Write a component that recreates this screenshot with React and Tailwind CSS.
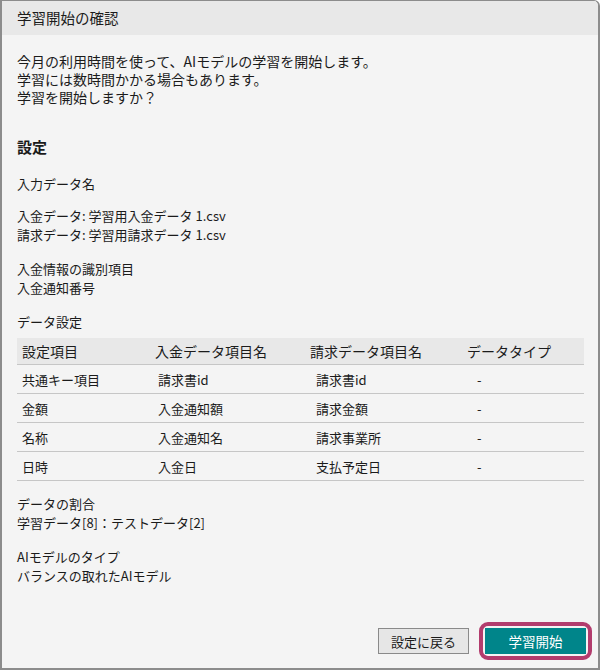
import React from "react";

const rows = [
  ["共通キー項目", "請求書id", "請求書id", "-"],
  ["金額", "入金通知額", "請求金額", "-"],
  ["名称", "入金通知名", "請求事業所", "-"],
  ["日時", "入金日", "支払予定日", "-"],
];

export default function App() {
  return (
    <div
      className="w-[600px] h-[670px] flex flex-col bg-[#f4f4f4] border-l-2 border-t border-r-2 border-b-2 border-[#8c8c8c] rounded-tr-[6px] overflow-hidden text-[#1b1b1b]"
      style={{ fontFamily: '"Noto Sans CJK JP", "Noto Sans", sans-serif' }}
    >
      <div className="h-[34px] shrink-0 bg-[#e8e8e8] flex items-center px-[15px] text-[14.5px]">
        学習開始の確認
      </div>

      <div className="flex-1 flex flex-col pl-[15px] pr-[14px] text-[13px] leading-[19px]">
        <div className="mt-[17px] leading-[18px] text-[14px]">
          <div>今月の利用時間を使って、AIモデルの学習を開始します。</div>
          <div>学習には数時間かかる場合もあります。</div>
          <div>学習を開始しますか？</div>
        </div>

        <div className="mt-[31px] text-[15px] leading-[20px] font-bold">設定</div>

        <div className="mt-[17px]">入力データ名</div>

        <div className="mt-[13px]">
          <div>入金データ: 学習用入金データ 1.csv</div>
          <div>請求データ: 学習用請求データ 1.csv</div>
        </div>

        <div className="mt-[15px]">
          <div>入金情報の識別項目</div>
          <div>入金通知番号</div>
        </div>

        <div className="mt-[15px]">データ設定</div>

        <div className="mt-[7px]">
          <div className="grid grid-cols-[133px_155px_157px_1fr] h-[27px] items-center bg-[#e8e8e8] border-b border-[#c6c6c6] text-[14px]">
            <div className="pl-[5px]">設定項目</div>
            <div className="pl-[5px]">入金データ項目名</div>
            <div className="pl-[5px]">請求データ項目名</div>
            <div className="pl-[5px]">データタイプ</div>
          </div>
          {rows.map((r, i) => (
            <div
              key={i}
              className="grid grid-cols-[133px_155px_157px_1fr] h-[29px] items-center border-b border-[#c6c6c6]"
            >
              <div className="pl-[5px]">{r[0]}</div>
              <div className="pl-[8px]">{r[1]}</div>
              <div className="pl-[11px]">{r[2]}</div>
              <div className="pl-[15px]">{r[3]}</div>
            </div>
          ))}
        </div>

        <div className="mt-[13px]">
          <div>データの割合</div>
          <div>学習データ[8]：テストデータ[2]</div>
        </div>

        <div className="mt-[15px]">
          <div>AIモデルのタイプ</div>
          <div>バランスの取れたAIモデル</div>
        </div>

        <div className="mt-auto flex justify-end items-center gap-[10px] pb-[8px] mr-[-8px]">
          <button className="w-[91px] h-[26px] bg-[#e6e6e6] border border-[#8a8a8a] text-[13px] text-[#1b1b1b] flex items-center justify-center">
            設定に戻る
          </button>
          <div className="border-4 border-[#b23c6d] rounded-[9px] p-[2px]">
            <button className="w-[101px] h-[26px] bg-[#00858a] text-white text-[13.5px] flex items-center justify-center">
              学習開始
            </button>
          </div>
        </div>
      </div>
    </div>
  );
}
